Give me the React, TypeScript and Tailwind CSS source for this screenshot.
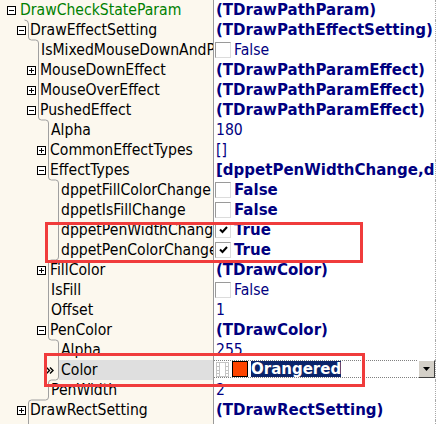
type Row = {
  name: string;
  level: number;
  box?: "+" | "-";
  value?: string;
  bold?: boolean;
  check?: boolean;
  green?: boolean;
  selected?: boolean;
};

const rows: Row[] = [
  { name: "DrawCheckStateParam", level: 0, box: "-", value: "(TDrawPathParam)", bold: true, green: true },
  { name: "DrawEffectSetting", level: 1, box: "-", value: "(TDrawPathEffectSetting)", bold: true },
  { name: "IsMixedMouseDownAndPushed", level: 2, check: false, value: "False" },
  { name: "MouseDownEffect", level: 2, box: "+", value: "(TDrawPathParamEffect)", bold: true },
  { name: "MouseOverEffect", level: 2, box: "+", value: "(TDrawPathParamEffect)", bold: true },
  { name: "PushedEffect", level: 2, box: "-", value: "(TDrawPathParamEffect)", bold: true },
  { name: "Alpha", level: 3, value: "180" },
  { name: "CommonEffectTypes", level: 3, box: "+", value: "[]" },
  { name: "EffectTypes", level: 3, box: "-", value: "[dppetPenWidthChange,dppetPenColorChange]", bold: true },
  { name: "dppetFillColorChange", level: 4, check: false, value: "False", bold: true },
  { name: "dppetIsFillChange", level: 4, check: false, value: "False", bold: true },
  { name: "dppetPenWidthChange", level: 4, check: true, value: "True", bold: true },
  { name: "dppetPenColorChange", level: 4, check: true, value: "True", bold: true },
  { name: "FillColor", level: 3, box: "+", value: "(TDrawColor)", bold: true },
  { name: "IsFill", level: 3, check: false, value: "False" },
  { name: "Offset", level: 3, value: "1" },
  { name: "PenColor", level: 3, box: "-", value: "(TDrawColor)", bold: true },
  { name: "Alpha", level: 4, value: "255" },
  { name: "Color", level: 4, selected: true },
  { name: "PenWidth", level: 3, value: "2" },
  { name: "DrawRectSetting", level: 1, box: "+", value: "(TDrawRectSetting)", bold: true },
];

const lineX = (level: number) => 18.5 + 10 * level;

function treePath() {
  const first = lineX(rows[1].level);
  let d = `M ${first - 4} 20 Q ${first} 20 ${first} 24`;
  for (let i = 2; i < rows.length; i++) {
    if (rows[i].level === rows[i - 1].level) continue;
    const y = i * 20;
    const a = lineX(rows[i - 1].level);
    const b = lineX(rows[i].level);
    const s = b > a ? 1 : -1;
    d += ` L ${a} ${y - 3} Q ${a} ${y} ${a + 3 * s} ${y} L ${b - 3 * s} ${y} Q ${b} ${y} ${b} ${y + 3}`;
  }
  d += ` L ${lineX(rows[rows.length - 1].level)} 424`;
  return d;
}

function ExpandBox({ sign }: { sign: "+" | "-" }) {
  return (
    <span className="relative mr-[4px] size-[9px] shrink-0 border border-black bg-white">
      <span className="absolute left-[1px] top-[3px] h-px w-[5px] bg-black" />
      {sign === "+" && <span className="absolute left-[3px] top-[1px] h-[5px] w-px bg-black" />}
    </span>
  );
}

function CheckBox({ checked }: { checked: boolean }) {
  return (
    <span className="ml-px flex size-4 shrink-0 items-center justify-center border border-b-[#dcdcdc] border-l-[#9a9a9a] border-r-[#dcdcdc] border-t-[#9a9a9a] bg-white">
      {checked && (
        <svg width="9" height="8" viewBox="0 0 9 8">
          <path d="M1 3.5 L3.5 6 L8 1" fill="none" stroke="black" strokeWidth="2" />
        </svg>
      )}
    </span>
  );
}

function FilmIcon() {
  return (
    <svg width="13" height="15" viewBox="0 0 13 15" className="shrink-0">
      <rect x="0.5" y="0.5" width="12" height="14" fill="none" stroke="#c4c4c4" />
      <path d="M3.5 0.5 V14.5 M9.5 0.5 V14.5 M0.5 4.5 H3.5 M0.5 8.5 H3.5 M0.5 11.5 H3.5 M9.5 4.5 H12.5 M9.5 8.5 H12.5 M9.5 11.5 H12.5" stroke="#c4c4c4" />
    </svg>
  );
}

const boldText = "font-['DejaVu_Sans',sans-serif] text-[15px] font-bold [font-stretch:normal]";

function ColorEditor() {
  return (
    <div className="flex h-[18px] flex-1 items-center border-y border-dotted border-[#808080]">
      <span className="ml-[2px]">
        <FilmIcon />
      </span>
      <span className="ml-[3px] h-4 w-4 shrink-0 border border-black bg-[#ff4500]" />
      <span className={`ml-[3px] bg-[#0a246a] leading-4 text-white ${boldText}`}>Orangered</span>
      <span className="flex-1" />
      <span className="flex h-[18px] w-[17px] shrink-0 items-center justify-center border border-b-[#404040] border-l-white border-r-[#404040] border-t-white bg-[#d4d0c8]">
        <svg width="7" height="4" viewBox="0 0 7 4">
          <path d="M0 0 H7 L3.5 4 Z" fill="black" />
        </svg>
      </span>
    </div>
  );
}

function NameCell({ row }: { row: Row }) {
  if (row.selected) {
    return (
      <div className="flex h-5 w-[213px] shrink-0 items-center overflow-hidden bg-[#fcf8ee] pl-[46px]">
        <svg width="8" height="7" viewBox="0 0 8 7" className="shrink-0">
          <path d="M0.5 0.5 L3.5 3.5 L0.5 6.5 M4 0.5 L7 3.5 L4 6.5" fill="none" stroke="black" strokeWidth="1.4" />
        </svg>
        <div className="ml-[5px] flex h-5 flex-1 items-center bg-[#dfdfdf] pl-[2px] text-black">{row.name}</div>
      </div>
    );
  }
  const pad = row.box ? 7 + 10 * row.level : 21 + 10 * row.level;
  return (
    <div
      className="flex h-5 w-[213px] shrink-0 items-center overflow-hidden whitespace-nowrap bg-[#fcf8ee]"
      style={{ paddingLeft: pad }}
    >
      {row.box && <ExpandBox sign={row.box} />}
      <span className={row.green ? "text-[#008000]" : "text-black"}>{row.name}</span>
    </div>
  );
}

function ValueCell({ row }: { row: Row }) {
  if (row.selected) {
    return (
      <div className="flex h-5 min-w-0 flex-1 items-start overflow-hidden">
        <ColorEditor />
      </div>
    );
  }
  return (
    <div className="flex h-5 min-w-0 flex-1 items-center overflow-hidden whitespace-nowrap text-[#000080]">
      {row.check !== undefined && <CheckBox checked={row.check} />}
      <span className={`${row.check !== undefined ? "ml-[3px]" : "ml-[2px]"} ${row.bold ? boldText : ""}`}>
        {row.value}
      </span>
    </div>
  );
}

export default function App() {
  return (
    <div className="relative h-[424px] w-[438px] overflow-hidden bg-white font-['DejaVu_Sans_Condensed','DejaVu_Sans',sans-serif] text-[15.6px] leading-5 [font-stretch:condensed]">
      {rows.map((row, i) => (
        <div key={i} className="flex h-5">
          <NameCell row={row} />
          <div className="w-px shrink-0 bg-[#9a9a9a]" />
          <ValueCell row={row} />
          <div className="w-[3px] shrink-0 border-l border-dotted border-[#a8a8a8]" />
        </div>
      ))}
      <div className="flex h-1">
        <div className="w-[213px] bg-[#fcf8ee]" />
        <div className="w-px bg-[#9a9a9a]" />
        <div className="flex-1" />
        <div className="w-[3px] border-l border-dotted border-[#a8a8a8]" />
      </div>

      <svg className="pointer-events-none absolute left-0 top-0" width="213" height="424">
        <path d={treePath()} fill="none" stroke="#a0a0a0" />
      </svg>

      <div className="pointer-events-none absolute left-[45px] top-[222px] h-[41px] w-[318px] border-[3px] border-[#f03c3c]" />
      <div className="pointer-events-none absolute left-[44px] top-[353px] h-[34px] w-[321px] border-[3px] border-[#f03c3c]" />
    </div>
  );
}
